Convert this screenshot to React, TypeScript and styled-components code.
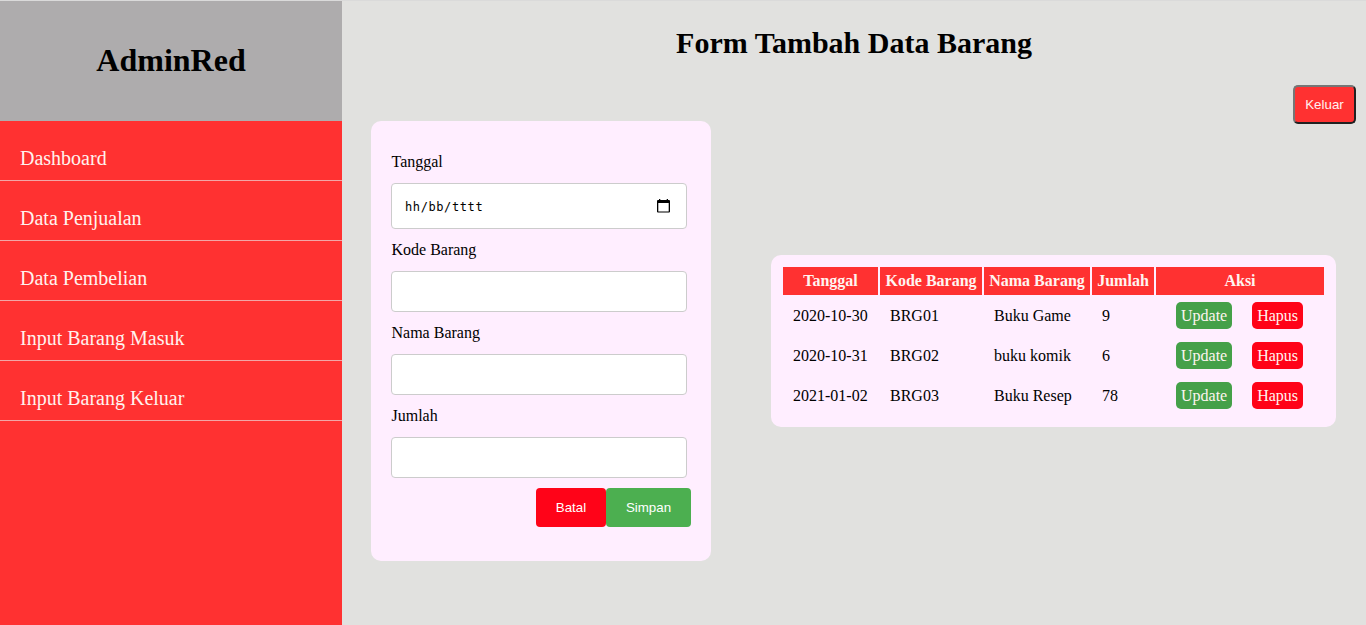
import React from 'react';
import styled, { createGlobalStyle } from 'styled-components';

const GlobalStyle = createGlobalStyle`
  * { box-sizing: border-box; }
  body {
    margin: 0;
    background: #e1e1df;
    font-family: 'Liberation Serif', 'Times New Roman', serif;
    font-size: 16px;
    color: #000;
  }
`;

const Page = styled.div`
  display: flex;
  height: 625px;
  overflow: hidden;
  border-top: 1px solid #dadada;
`;

const Sidebar = styled.aside`
  width: 342px;
  flex: none;
  background: #ff3131;
`;

const Brand = styled.h1`
  margin: 0;
  height: 120px;
  padding-bottom: 2px;
  display: flex;
  align-items: center;
  justify-content: center;
  background: #aeacad;
  font-size: 32px;
  line-height: 36px;
`;

const MenuItem = styled.a`
  display: block;
  height: 60px;
  padding: 26px 20px 0;
  border-bottom: 1px solid #f2a6a6;
  color: #fff2ee;
  font-size: 20px;
  line-height: 23px;
`;

const Main = styled.main`
  flex: 1;
  display: flex;
  flex-direction: column;
`;

const Title = styled.h2`
  margin: 25px 0 0;
  text-align: center;
  font-size: 30px;
  line-height: 34px;
`;

const LogoutButton = styled.button`
  align-self: flex-end;
  margin: 25px 10px 0 0;
  width: 63px;
  height: 39px;
  padding: 0;
  border: 2px solid;
  border-color: #767676 #212121 #212121 #767676;
  border-radius: 5px;
  background: #ff3131;
  color: #fff0f0;
  font: 13.333px 'Liberation Sans', Arial, sans-serif;
`;

const Content = styled.div`
  display: flex;
  align-items: center;
  justify-content: space-between;
  height: 440px;
  margin: -3px 30px 0 29px;
`;

const FormCard = styled.form`
  width: 340px;
  height: 440px;
  padding: 30px 20px;
  border-radius: 10px;
  background: #ffeeff;
`;

const Field = styled.label`
  display: block;
  margin-bottom: 10px;
`;

const FieldName = styled.span`
  display: block;
  height: 32px;
  padding: 2px 0 0 0.5px;
  line-height: 18px;
`;

const FieldBox = styled.div<{ $height: number }>`
  display: flex;
  align-items: center;
  justify-content: space-between;
  width: 296px;
  height: ${({ $height }) => $height}px;
  padding: 0 16px 0 13px;
  border: 1px solid #ccc;
  border-radius: 4px;
  background: #fff;
`;

const DateText = styled.span`
  padding-top: 2px;
  font: 12px 'DejaVu Sans Mono', monospace;
  letter-spacing: 0.6px;
`;

const TextInput = styled.input`
  width: 100%;
  border: 0;
  outline: 0;
  background: transparent;
`;

const FormActions = styled.div`
  display: flex;
  justify-content: flex-end;
`;

const FormButton = styled.button<{ $color: string; $width: number }>`
  width: ${({ $width }) => $width}px;
  height: 39px;
  padding: 0;
  border: 0;
  border-radius: 4px;
  background: ${({ $color }) => $color};
  color: #fff;
  font: 13.333px 'Liberation Sans', Arial, sans-serif;
`;

const TableCard = styled.section`
  width: 565px;
  padding: 10px;
  border-radius: 10px;
  background: #ffeeff;
`;

const Table = styled.table`
  width: 545px;
  table-layout: fixed;
  border-spacing: 2px;
`;

const HeadCell = styled.th<{ $width: number }>`
  width: ${({ $width }) => $width}px;
  height: 28px;
  padding: 0;
  background: #ff3131;
  color: #fff4f0;
  white-space: nowrap;
  line-height: 18px;
`;

const Cell = styled.td`
  height: 38px;
  padding: 0 10px;
  line-height: 18px;
  white-space: nowrap;
`;

const RowActions = styled.div`
  display: flex;
  gap: 20px;
  padding: 0 0 2px 10px;
`;

const RowButton = styled.a<{ $color: string }>`
  height: 27px;
  padding: 5px;
  border-radius: 5px;
  background: ${({ $color }) => $color};
  color: #fff4f0;
  line-height: 18px;
`;

const menu = ['Dashboard', 'Data Penjualan', 'Data Pembelian', 'Input Barang Masuk', 'Input Barang Keluar'];

const columns = [
  { name: 'Tanggal', width: 95 },
  { name: 'Kode Barang', width: 102 },
  { name: 'Nama Barang', width: 106 },
  { name: 'Jumlah', width: 62 },
  { name: 'Aksi', width: 168 },
];

const rows = [
  ['2020-10-30', 'BRG01', 'Buku Game', '9'],
  ['2020-10-31', 'BRG02', 'buku komik', '6'],
  ['2021-01-02', 'BRG03', 'Buku Resep', '78'],
];

const CalendarIcon = () => (
  <svg width="13" height="14" viewBox="0 0 13 14">
    <path
      d="M2 0h1.3v1h6.4V0H11v1h1a1 1 0 0 1 1 1v10.6a1 1 0 0 1-1 1H1a1 1 0 0 1-1-1V2a1 1 0 0 1 1-1h1zM1.3 4v8.4h10.4V4z"
      fill="#000"
      fillRule="evenodd"
    />
  </svg>
);

export default function App() {
  return (
    <>
      <GlobalStyle />
      <Page>
        <Sidebar>
          <Brand>AdminRed</Brand>
          <nav>
            {menu.map((item) => (
              <MenuItem key={item}>{item}</MenuItem>
            ))}
          </nav>
        </Sidebar>
        <Main>
          <Title>Form Tambah Data Barang</Title>
          <LogoutButton>Keluar</LogoutButton>
          <Content>
            <FormCard>
              <Field>
                <FieldName>Tanggal</FieldName>
                <FieldBox $height={46}>
                  <DateText>hh/bb/tttt</DateText>
                  <CalendarIcon />
                </FieldBox>
              </Field>
              {['Kode Barang', 'Nama Barang', 'Jumlah'].map((name) => (
                <Field key={name}>
                  <FieldName>{name}</FieldName>
                  <FieldBox $height={41}>
                    <TextInput type="text" />
                  </FieldBox>
                </Field>
              ))}
              <FormActions>
                <FormButton type="button" $color="#ff0318" $width={70}>Batal</FormButton>
                <FormButton type="button" $color="#4caf50" $width={85}>Simpan</FormButton>
              </FormActions>
            </FormCard>
            <TableCard>
              <Table>
                <thead>
                  <tr>
                    {columns.map(({ name, width }) => (
                      <HeadCell key={name} $width={width}>{name}</HeadCell>
                    ))}
                  </tr>
                </thead>
                <tbody>
                  {rows.map((row) => (
                    <tr key={row[1]}>
                      {row.map((value) => (
                        <Cell key={value}>{value}</Cell>
                      ))}
                      <Cell>
                        <RowActions>
                          <RowButton $color="#45a049">Update</RowButton>
                          <RowButton $color="#ff0318">Hapus</RowButton>
                        </RowActions>
                      </Cell>
                    </tr>
                  ))}
                </tbody>
              </Table>
            </TableCard>
          </Content>
        </Main>
      </Page>
    </>
  );
}
